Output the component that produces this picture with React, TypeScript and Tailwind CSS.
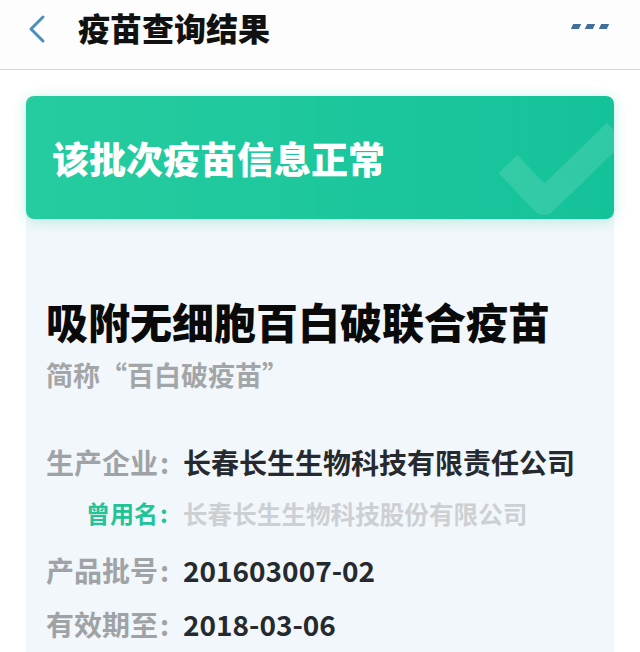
import React from 'react';

const font = { fontFamily: '"Noto Sans CJK SC", "Noto Sans", sans-serif' };

interface InfoRow {
  label: string;
  value: string;
  kind: 'main' | 'alias';
}

const rows: InfoRow[] = [
  { label: '生产企业', value: '长春长生生物科技有限责任公司', kind: 'main' },
  { label: '曾用名', value: '长春长生生物科技股份有限公司', kind: 'alias' },
  { label: '产品批号', value: '201603007-02', kind: 'main' },
  { label: '有效期至', value: '2018-03-06', kind: 'main' },
];

const rowGap = ['mt-[60px]', 'mt-[23px]', 'mt-[29px]', 'mt-[26px]'];

const App: React.FC = () => {
  return (
    <div className="w-[640px] h-[652px] bg-white overflow-hidden" style={font}>
      {/* top bar */}
      <div className="h-[70px] flex items-start pt-[9px] border-b border-[#dadada] bg-[#fdfdfd]">
        <svg className="ml-[27px] mt-[5px]" width="20" height="30" viewBox="0 0 20 30">
          <path d="M16 3 L4 15 L16 27" fill="none" stroke="#4b8fbf" strokeWidth="3" strokeLinecap="round" strokeLinejoin="round" />
        </svg>
        <span className="ml-[31px] text-[32px] leading-[36px] font-black text-[#111]">疫苗查询结果</span>
        <div className="ml-auto mr-[32px] mt-[15px] flex gap-[6px]">
          <span className="block w-[8px] h-[5px] bg-[#3f6f9a] -skew-x-[25deg]" />
          <span className="block w-[8px] h-[5px] bg-[#3f6f9a] -skew-x-[25deg]" />
          <span className="block w-[8px] h-[5px] bg-[#3f6f9a] -skew-x-[25deg]" />
        </div>
      </div>

      <div className="px-[26px] pt-[26px]">
        <div className="bg-[#f2f7fb] rounded-[8px] h-[600px]">
          {/* status banner */}
          <div className="relative h-[123px] rounded-[8px] overflow-hidden bg-gradient-to-r from-[#25cc9f] to-[#14c29a] shadow-[0_2px_14px_rgba(30,200,155,0.28)] flex items-center pl-[26px]">
            <span className="text-[37px] leading-[40px] font-black text-white">该批次疫苗信息正常</span>
            <svg className="absolute left-[462px] top-[22px]" width="130" height="100" viewBox="0 0 130 100">
              <path d="M20 46 L56 84 L128 14" fill="none" stroke="#ffffff" strokeOpacity="0.12" strokeWidth="26" strokeLinejoin="round" />
            </svg>
          </div>

          <div className="pl-[20px]">
            <div className="mt-[81px] text-[42px] leading-[42px] font-black text-[#0a0a0a] whitespace-nowrap">吸附无细胞百白破联合疫苗</div>
            <div className="mt-[19px] text-[27px] leading-[27px] font-bold text-[#a3a6a8] whitespace-nowrap">简称“百白破疫苗”</div>

            {rows.map((r, i) => (
              <div key={r.label} className={`${rowGap[i]} flex items-center whitespace-nowrap`}>
                <div
                  className={`w-[137px] shrink-0 flex justify-end font-bold ${
                    r.kind === 'alias' ? 'text-[24px] leading-[28px] text-[#22c497]' : 'text-[28px] leading-[28px] text-[#a0a3a6]'
                  }`}
                >
                  <span>{r.label}</span>
                  <span className="w-[25px] pl-[2px] text-left">:</span>
                </div>
                <div
                  className={`font-bold ${
                    r.kind === 'alias' ? 'text-[24.6px] leading-[28px] text-[#cdd0d3]' : 'text-[28px] leading-[28px] text-[#262a2e]'
                  }`}
                >
                  {r.value}
                </div>
              </div>
            ))}
          </div>
        </div>
      </div>
    </div>
  );
};

export default App;
